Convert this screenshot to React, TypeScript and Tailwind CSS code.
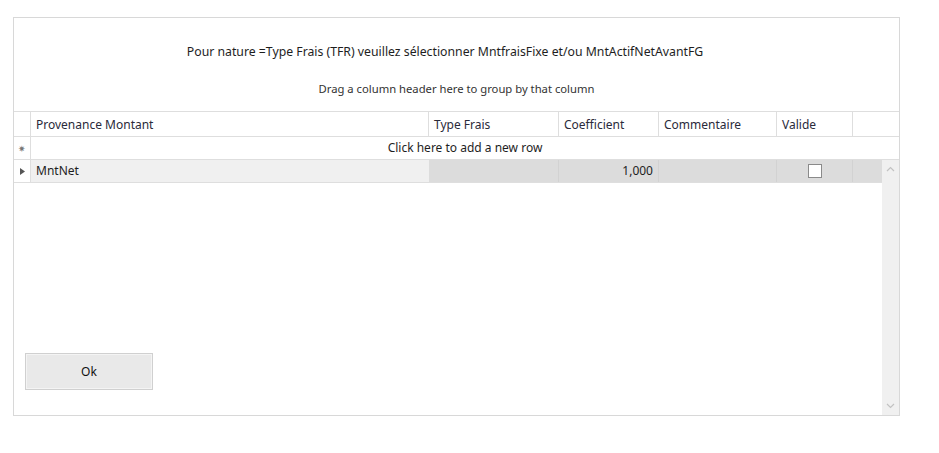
import * as React from "react";

const columns = [
  { label: "Provenance Montant", width: "w-[398px]" },
  { label: "Type Frais", width: "w-[130px]" },
  { label: "Coefficient", width: "w-[100px]" },
  { label: "Commentaire", width: "w-[118px]" },
  { label: "Valide", width: "w-[76px]" },
];

export default function App() {
  return (
    <div
      className="h-[453px] w-[939px] bg-white pl-[13px] pt-[17px] text-[#1e1e1e]"
      style={{ fontFamily: '"Noto Sans", "Open Sans", sans-serif' }}
    >
      <div className="flex h-[399px] w-[887px] flex-col border border-[#d8d8d8]">
        {/* title area */}
        <div className="flex h-[93px] flex-col items-center">
          <p className="mt-[25px] pr-[23px] text-[12.25px] leading-[18px]">
            Pour nature =Type Frais (TFR) veuillez sélectionner MntfraisFixe
            et/ou MntActifNetAvantFG
          </p>
          <p className="mt-[20px] text-[11.25px] leading-[16px] text-[#333]">
            Drag a column header here to group by that column
          </p>
        </div>

        {/* column headers */}
        <div className="flex h-[26px] border-y border-[#dedede] text-[12px]">
          <div className="w-[17px] shrink-0 border-r border-[#dedede]" />
          {columns.map((c) => (
            <div
              key={c.label}
              className={`${c.width} flex shrink-0 items-center border-r border-[#dedede] pl-[5px] pt-[1px] text-[#2a2a3a]`}
            >
              {c.label}
            </div>
          ))}
          <div className="flex-1" />
        </div>

        {/* new row */}
        <div className="flex h-[23px] border-b border-[#dedede] text-[12px]">
          <div className="flex w-[17px] shrink-0 items-center justify-center border-r border-[#dedede]">
            <span className="text-[9px] leading-none text-[#777]">✷</span>
          </div>
          <div className="flex flex-1 items-center justify-center">
            Click here to add a new row
          </div>
        </div>

        {/* body */}
        <div className="flex flex-1">
          <div className="flex flex-1 flex-col">
            <div className="flex h-[23px] border-b border-[#dedede] text-[12px]">
              <div className="flex w-[17px] shrink-0 items-center justify-center border-r border-[#dedede]">
                <svg width="5" height="7" viewBox="0 0 5 7">
                  <path d="M0 0 L5 3.5 L0 7 Z" fill="#555" />
                </svg>
              </div>
              <div className="flex w-[398px] shrink-0 items-center bg-[#f0f0f0] pl-[5px]">
                MntNet
              </div>
              <div className="w-[130px] shrink-0 border-r border-[#d2d2d2] bg-[#dcdcdc]" />
              <div className="flex w-[100px] shrink-0 items-center justify-end border-r border-[#d2d2d2] bg-[#dcdcdc] pr-[5px]">
                1,000
              </div>
              <div className="w-[118px] shrink-0 border-r border-[#d2d2d2] bg-[#dcdcdc]" />
              <div className="flex w-[76px] shrink-0 items-center justify-center border-r border-[#d2d2d2] bg-[#dcdcdc]">
                <div className="h-[14px] w-[14px] border border-[#8a8a8a] bg-white" />
              </div>
              <div className="flex-1 bg-[#dcdcdc]" />
            </div>

            <div className="flex-1" />

            <div className="mb-[25px] ml-[11px]">
              <button
                type="button"
                className="h-[37px] w-[128px] border border-[#d0d0d0] bg-[#e9e9e9] text-[12px] text-[#111] shadow-[inset_0_0_0_1px_#f4f4f4]"
              >
                Ok
              </button>
            </div>
          </div>

          {/* vertical scrollbar */}
          <div className="flex w-[17px] flex-col items-center justify-between bg-[#f0f0f0] py-[6px]">
            <svg width="9" height="6" viewBox="0 0 9 6">
              <path d="M1 5 L4.5 1.5 L8 5" stroke="#c2c2c2" strokeWidth="1.2" fill="none" />
            </svg>
            <svg width="9" height="6" viewBox="0 0 9 6">
              <path d="M1 1 L4.5 4.5 L8 1" stroke="#c2c2c2" strokeWidth="1.2" fill="none" />
            </svg>
          </div>
        </div>
      </div>
    </div>
  );
}
